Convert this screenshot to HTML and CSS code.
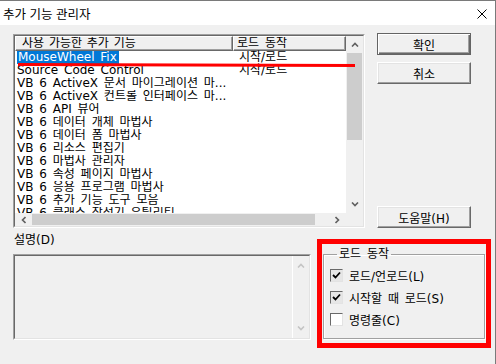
FILE: index.html
```html
<!DOCTYPE html>
<html lang="ko">
<head>
<meta charset="utf-8">
<title>추가 기능 관리자</title>
<link rel="stylesheet" href="styles.css">
</head>
<body>
<div class="window">
  <div class="titlebar">
    <span class="title">추가 기능 관리자</span>
    <svg class="close" width="10" height="10" viewBox="0 0 10 10"><path d="M0.5 0.5L9.5 9.5M9.5 0.5L0.5 9.5" stroke="#000" stroke-width="1" fill="none"/></svg>
  </div>
  <div class="content">
    <div class="top">
      <div class="listbox">
        <div class="listbox-inner">
          <div class="listview">
            <div class="lv-header">
              <div class="hcell h1">사용 가능한 추가 기능</div>
              <div class="hcell h2">로드 동작</div>
            </div>
            <div class="lv-rows">
              <div class="row"><span class="c1"><span class="sel">MouseWheel Fix</span></span><span class="c2">시작/로드</span></div>
              <div class="row"><span class="c1">Source Code Control</span><span class="c2">시작/로드</span></div>
              <div class="row"><span class="c1">VB 6 ActiveX 문서 마이그레이션 마...</span></div>
              <div class="row"><span class="c1">VB 6 ActiveX 컨트롤 인터페이스 마...</span></div>
              <div class="row"><span class="c1">VB 6 API 뷰어</span></div>
              <div class="row"><span class="c1">VB 6 데이터 개체 마법사</span></div>
              <div class="row"><span class="c1">VB 6 데이터 폼 마법사</span></div>
              <div class="row"><span class="c1">VB 6 리소스 편집기</span></div>
              <div class="row"><span class="c1">VB 6 마법사 관리자</span></div>
              <div class="row"><span class="c1">VB 6 속성 페이지 마법사</span></div>
              <div class="row"><span class="c1">VB 6 응용 프로그램 마법사</span></div>
              <div class="row"><span class="c1">VB 6 추가 기능 도구 모음</span></div>
              <div class="row"><span class="c1">VB 6 클래스 작성기 유틸리티</span></div>
            </div>
          </div>
          <div class="vscroll">
            <div class="sb-btn"><svg width="8" height="5" viewBox="0 0 8 5"><path d="M1 4.5L4 1.5L7 4.5" stroke="#606060" stroke-width="1.6" fill="none"/></svg></div>
            <div class="vthumb"></div>
            <div class="sb-track"></div>
            <div class="sb-btn"><svg width="8" height="5" viewBox="0 0 8 5"><path d="M1 0.5L4 3.5L7 0.5" stroke="#606060" stroke-width="1.6" fill="none"/></svg></div>
          </div>
          <div class="hscroll">
            <div class="sb-hbtn"><svg width="5" height="8" viewBox="0 0 5 8"><path d="M4.5 1L1.5 4L4.5 7" stroke="#606060" stroke-width="1.6" fill="none"/></svg></div>
            <div class="hthumb"></div>
            <div class="sb-track"></div>
            <div class="sb-hbtn"><svg width="5" height="8" viewBox="0 0 5 8"><path d="M0.5 1L3.5 4L0.5 7" stroke="#606060" stroke-width="1.6" fill="none"/></svg></div>
          </div>
          <div class="corner"></div>
        </div>
      </div>
      <div class="buttons">
        <button class="btn default">확인</button>
        <button class="btn">취소</button>
        <button class="btn help">도움말(H)</button>
      </div>
    </div>
    <div class="bottom">
      <div class="desc-col">
        <div class="desc-label">설명(D)</div>
        <div class="descbox">
          <div class="descbox-inner">
            <div class="desc-text"></div>
            <div class="desc-scroll">
              <svg width="8" height="5" viewBox="0 0 8 5"><path d="M1 4.5L4 1.5L7 4.5" stroke="#c4c4c4" stroke-width="1.6" fill="none"/></svg>
              <svg width="8" height="5" viewBox="0 0 8 5"><path d="M1 0.5L4 3.5L7 0.5" stroke="#c4c4c4" stroke-width="1.6" fill="none"/></svg>
            </div>
          </div>
        </div>
      </div>
      <fieldset class="group">
        <legend class="group-label">로드 동작</legend>
        <div class="check"><span class="box on"><svg width="9" height="9" viewBox="0 0 9 9"><path d="M1 4L3.5 6.5L8 1.5" stroke="#000" stroke-width="1.8" fill="none"/></svg></span><span>로드/언로드(L)</span></div>
        <div class="check"><span class="box on"><svg width="9" height="9" viewBox="0 0 9 9"><path d="M1 4L3.5 6.5L8 1.5" stroke="#000" stroke-width="1.8" fill="none"/></svg></span><span>시작할 때 로드(S)</span></div>
        <div class="check"><span class="box"></span><span>명령줄(C)</span></div>
      </fieldset>
    </div>
  </div>
  <div class="mark-line"></div>
  <div class="mark-box"></div>
</div>
</body>
</html>
```

FILE: styles.css
```css
* { box-sizing: border-box; }
html, body { margin: 0; padding: 0; }
body {
  width: 496px;
  height: 364px;
  overflow: hidden;
  background: #f0f0f0;
  font-family: "DejaVu Sans", "Noto Sans CJK KR", sans-serif;
  font-size: 12px;
  word-spacing: 2px;
  color: #000;
}
.window {
  position: relative;
  width: 496px;
  height: 364px;
  border-top: 1px solid #7a7a7a;
  border-right: 1px solid #7a7a7a;
  background: #f0f0f0;
}
.titlebar {
  height: 24px;
  background: #fff;
  display: flex;
  align-items: center;
  padding: 0 8px 0 3px;
}
.title {
  font-family: "Noto Sans CJK KR", sans-serif;
  font-size: 12.5px;
  word-spacing: 0;
}
.close { margin-left: auto; margin-top: 1px; }

.content { padding: 9px 0 0 13px; }
.top { display: flex; gap: 12px; }

.listbox {
  width: 352px;
  height: 194px;
  border: 1px solid;
  border-color: #a0a0a0 #fff #fff #a0a0a0;
}
.listbox-inner {
  width: 100%;
  height: 100%;
  border: 1px solid;
  border-color: #696969 #e3e3e3 #e3e3e3 #696969;
  display: grid;
  grid-template-columns: 331px 17px;
  grid-template-rows: 177px 13px;
  background: #fff;
}
.listview { overflow: hidden; background: #fff; }
.lv-header { display: flex; height: 15px; }
.hcell {
  height: 15px;
  line-height: 13px;
  background: #f0f0f0;
  border: 1px solid;
  border-color: #fff #696969 #696969 #fff;
  box-shadow: inset -1px -1px #a0a0a0;
  white-space: nowrap;
  overflow: hidden;
}
.h1 { width: 218px; padding-left: 6px; word-spacing: 1px; }
.h2 { width: 113px; padding-left: 3px; }
.row { display: flex; height: 13px; line-height: 13px; white-space: nowrap; }
.c1 { width: 218px; padding-left: 2px; overflow: hidden; flex: none; }
.c2 { padding-left: 6px; }
.sel { background: #0078d7; color: #fff; padding: 0 2px 0 1px; display: inline-block; height: 13px; }

.vscroll { background: #f0f0f0; display: flex; flex-direction: column; }
.sb-btn { height: 17px; display: flex; align-items: center; justify-content: center; flex: none; }
.vthumb { height: 87px; margin: 0 1px; background: #cdcdcd; flex: none; }
.sb-track { flex: 1; }
.hscroll { background: #f0f0f0; display: flex; }
.sb-hbtn { width: 17px; display: flex; align-items: center; justify-content: center; flex: none; }
.hthumb { width: 283px; margin: 1px 0; background: #cdcdcd; flex: none; }
.corner { background: #f0f0f0; }

.buttons {
  width: 94px;
  height: 195px;
  margin-top: -1px;
  display: flex;
  flex-direction: column;
  gap: 7px;
}
.btn {
  height: 22px;
  padding: 0;
  font: inherit;
  font-size: 12px;
  color: #000;
  background: #f0f0f0;
  border: 1px solid;
  border-color: #fff #696969 #696969 #fff;
  box-shadow: inset -1px -1px #a0a0a0, inset 1px 1px #e3e3e3;
}
.btn.default {
  border: 1px solid #646464;
  box-shadow: inset 1px 1px #fff, inset -1px -1px #696969, inset -2px -2px #a0a0a0;
}
.btn.help { margin-top: auto; }

.bottom { display: flex; gap: 12px; }
.desc-col { width: 298px; }
.desc-label { margin-top: 5px; height: 14px; line-height: 14px; padding-left: 1px; }
.descbox {
  margin-top: 7px;
  height: 86px;
  border: 1px solid;
  border-color: #a0a0a0 #fff #fff #a0a0a0;
}
.descbox-inner {
  height: 100%;
  border: 1px solid;
  border-color: #696969 #e3e3e3 #e3e3e3 #696969;
  display: flex;
  background: #f0f0f0;
}
.desc-text { flex: 1; }
.desc-scroll {
  width: 17px;
  border-left: 1px solid #fff;
  display: flex;
  flex-direction: column;
  justify-content: space-between;
  align-items: center;
  padding: 7px 0 7px;
}

.group {
  margin: 19px 0 0 0;
  padding: 0 0 0 6px;
  width: 162px;
  height: 92px;
  border: 1px solid #a0a0a0;
  box-shadow: inset 1px 1px #fff, 1px 1px #fff;
  min-width: 0;
}
.group-label {
  padding: 0 2px;
  margin-left: 7px;
  line-height: 14px;
}
.check {
  display: flex;
  align-items: center;
  gap: 6px;
  height: 16px;
  margin-top: 6px;
  white-space: nowrap;
}
.box {
  width: 13px;
  height: 13px;
  flex: none;
  border: 1px solid;
  border-color: #696969 #e3e3e3 #e3e3e3 #696969;
  background: #fff;
  display: flex;
  align-items: center;
  justify-content: center;
}
.box.on { background: #e6e6e6; }

.mark-line {
  position: absolute;
  left: 18px;
  top: 62px;
  width: 337px;
  height: 3px;
  background: #ff0000;
  transform: rotate(0.17deg);
  transform-origin: left center;
}
.mark-box {
  position: absolute;
  left: 317px;
  top: 238px;
  width: 174px;
  height: 109px;
  border: 5px solid #ff0000;
}
```
